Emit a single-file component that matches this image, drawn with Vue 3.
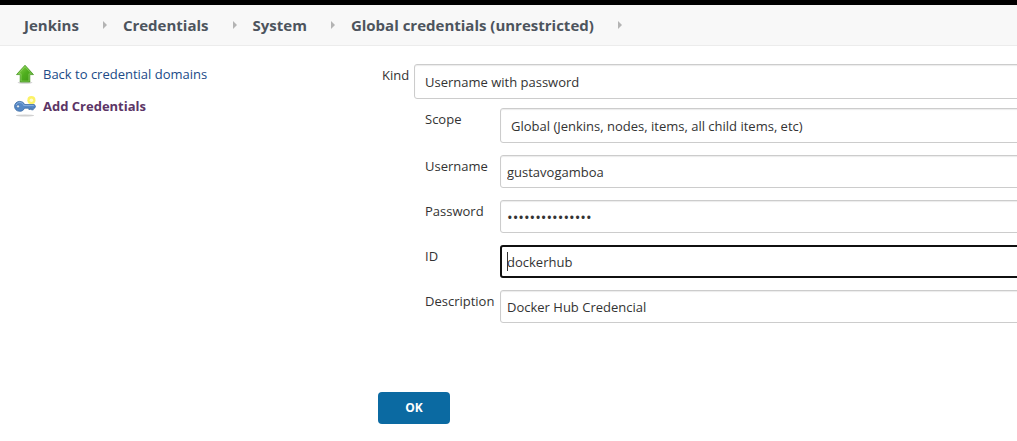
<script setup>
import { ref } from 'vue'

const crumbs = ['Jenkins', 'Credentials', 'System', 'Global credentials (unrestricted)']
const kind = ref('Username with password')
const scope = ref('Global (Jenkins, nodes, items, all child items, etc)')
const fields = ref([
  { id: 'username', label: 'Username', type: 'text', value: 'gustavogamboa' },
  { id: 'password', label: 'Password', type: 'password', value: 'changeme1234567' },
  { id: 'cred-id', label: 'ID', type: 'text', value: 'dockerhub', active: true },
  { id: 'description', label: 'Description', type: 'text', value: 'Docker Hub Credencial' }
])
</script>

<template>
  <div class="page">
    <nav class="crumbs" aria-label="Breadcrumb">
      <template v-for="crumb in crumbs" :key="crumb">
        <a href="#">{{ crumb }}</a>
        <svg class="arrow" viewBox="0 0 4 8" aria-hidden="true"><path d="M0 0L4 4L0 8Z" fill="#b4b4b4" /></svg>
      </template>
    </nav>
    <div class="body">
      <aside class="side">
        <a class="task" href="#">
          <svg viewBox="0 0 20 20" aria-hidden="true">
            <defs>
              <linearGradient id="green" x1="0" y1="0" x2="1" y2="1">
                <stop offset="0" stop-color="#8fd850" />
                <stop offset="0.5" stop-color="#4fae1e" />
                <stop offset="1" stop-color="#3b9312" />
              </linearGradient>
            </defs>
            <ellipse cx="10" cy="18.6" rx="7.5" ry="1.2" fill="#000" opacity="0.18" />
            <path d="M10 1.2L18.5 10.6H14.8V18H5.2V10.6H1.5Z" fill="url(#green)" stroke="#4c9a28" stroke-width="0.8" stroke-linejoin="round" />
            <path d="M10 2.6L16.4 9.8H13.9V17.1H6.1V9.8H3.6Z" fill="none" stroke="#b5e88c" stroke-width="0.7" opacity="0.6" />
          </svg>
          <span>Back to credential domains</span>
        </a>
        <a class="task current" href="#">
          <svg viewBox="0 0 24 24" aria-hidden="true">
            <ellipse cx="12" cy="22.4" rx="10" ry="1.1" fill="#000" opacity="0.18" />
            <circle cx="19" cy="5.6" r="4.4" fill="#fbf04c" opacity="0.85" />
            <circle cx="19" cy="5.6" r="1.9" fill="#fffbd0" />
            <path d="M6.2 7C3 7 0.6 9.3 0.6 12.4S3 17.8 6.2 17.8C8.8 17.8 10.7 16.4 11.5 14.4H16.2V15.8H18V14.4H19V16.2H21V14.4H22.6L23.5 12.4L22.2 10.4H11.6C10.8 8.3 8.8 7 6.2 7Z" fill="#5588c6" stroke="#33659f" stroke-width="0.8" stroke-linejoin="round" />
            <path d="M2.2 11C3 9 4.6 8.2 6.4 8.2C8.5 8.2 10 9.4 10.6 11.5H21.6" fill="none" stroke="#8fb6e4" stroke-width="0.9" />
            <ellipse cx="4.4" cy="12.4" rx="1.4" ry="1.8" fill="#fff" stroke="#33659f" stroke-width="0.7" />
          </svg>
          <span>Add Credentials</span>
        </a>
      </aside>
      <form class="form" @submit.prevent>
        <div class="row kind">
          <label for="kind">Kind</label>
          <select id="kind" v-model="kind">
            <option>Username with password</option>
          </select>
        </div>
        <div class="group">
          <div class="row scope">
            <label for="scope">Scope</label>
            <select id="scope" v-model="scope">
              <option>Global (Jenkins, nodes, items, all child items, etc)</option>
            </select>
          </div>
          <div v-for="f in fields" :key="f.id" class="row">
            <label :for="f.id">{{ f.label }}</label>
            <div class="box">
              <input :id="f.id" v-model="f.value" :type="f.type" :class="{ active: f.active }" autocomplete="off" />
              <i v-if="f.active" class="caret"></i>
            </div>
          </div>
        </div>
        <button class="ok" type="submit">OK</button>
      </form>
    </div>
  </div>
</template>

<style>
body {
  margin: 0;
  background: #fff;
}
</style>

<style scoped>
.page {
  overflow: hidden;
  border-top: 5px solid #000;
  font: 13px/20px "Open Sans", "Noto Sans", sans-serif;
  color: #333;
}
.crumbs {
  display: flex;
  align-items: center;
  height: 40px;
  padding-left: 24px;
  background: #f8f8f8;
  border-bottom: 1px solid #ececec;
}
.crumbs a {
  color: #4d545d;
  font-size: 15px;
  font-weight: 700;
  text-decoration: none;
  white-space: nowrap;
}
.arrow {
  flex: none;
  width: 4px;
  height: 8px;
  margin: 0 16px 0 24px;
}
.body {
  display: flex;
  padding-top: 18px;
}
.side {
  flex: none;
  width: 363px;
  padding-left: 15px;
}
.task {
  display: flex;
  align-items: center;
  gap: 8px;
  height: 20px;
  margin-bottom: 12px;
  color: #204a87;
  text-decoration: none;
}
.task svg {
  width: 20px;
  height: 20px;
}
.current {
  color: #5c3566;
  font-weight: 700;
}
.current svg {
  width: 22px;
  height: 22px;
  margin: 0 -1px;
}
.form {
  flex: 1;
  min-width: 0;
  margin-right: -8px;
}
.row {
  display: flex;
  align-items: flex-start;
  margin-bottom: 12px;
}
.row label {
  flex: none;
  width: 75px;
  line-height: 22px;
}
.kind {
  margin-bottom: 9px;
}
.kind label {
  width: 32px;
  padding-left: 4px;
}
.group {
  padding-left: 47px;
}
.box {
  position: relative;
  flex: 1;
}
select,
input {
  box-sizing: border-box;
  flex: 1;
  min-width: 0;
  width: 100%;
  height: 33px;
  margin: 0;
  padding: 0 6px;
  border: 1px solid #ccc;
  border-radius: 3px;
  background: #fff;
  box-shadow: inset 0 1px 1px rgba(0, 0, 0, 0.08);
  color: #333;
  font: inherit;
  outline: none;
}
select {
  height: 35px;
  padding: 1px 10px 0;
  appearance: none;
}
input[type="password"] {
  font-size: 15px;
}
input.active {
  padding: 0 5px;
  border: 2px solid #101010;
  box-shadow: none;
}
.caret {
  position: absolute;
  top: 7px;
  left: 7px;
  width: 1px;
  height: 19px;
  background: #333;
}
.ok {
  display: block;
  width: 72px;
  height: 32px;
  margin: 69px 0 16px;
  padding: 0;
  border: 0;
  border-radius: 4px;
  background: #0b6aa2;
  color: #fff;
  font: 700 12px/32px "Open Sans", "Noto Sans", sans-serif;
}
</style>
